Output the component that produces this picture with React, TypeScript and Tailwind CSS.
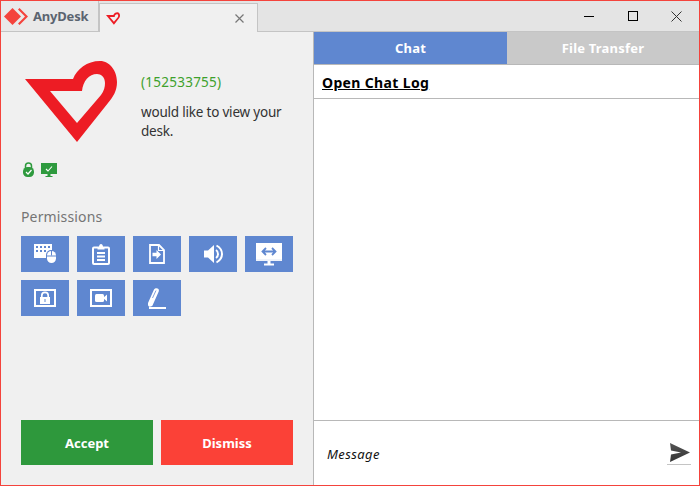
const W = "#ffffff";
const B = "#5f87d0";

function Heart({ w, h }: { w: number; h: number }) {
  return (
    <svg width={w} height={h} viewBox="0 0 92 81" className="block shrink-0">
      <path
        d="M0 18 L48 18 C52 8 62 0 75 0 C85 0 92 10 92 21 C92 30 88 36 83 42 L52 81 Z M25 30 L52 62 L76 34 C79 30 80 26 80 22 C80 16 76 13 72 13 C64 13 58 20 57 30 Z"
        fill="#ed1c24"
        fillRule="evenodd"
      />
    </svg>
  );
}

function KeyboardMouse() {
  return (
    <svg width="23" height="20" viewBox="0 0 23 20">
      <rect x="0" y="0" width="18" height="14" fill={W} />
      <g fill={B}>
        <rect x="2" y="2" width="2" height="2" /><rect x="6" y="2" width="2" height="2" /><rect x="10" y="2" width="2" height="2" /><rect x="14" y="2" width="2" height="2" />
        <rect x="2" y="6" width="2" height="2" /><rect x="6" y="6" width="2" height="2" /><rect x="10" y="6" width="2" height="2" />
      </g>
      <rect x="12" y="6" width="11" height="14" rx="5" fill={B} />
      <rect x="13" y="7" width="9" height="12" rx="4.500" fill={W} />
      <rect x="13" y="11.500" width="9" height="1" fill={B} />
      <rect x="17" y="7" width="1" height="4.500" fill={B} />
    </svg>
  );
}

function Clipboard() {
  return (
    <svg width="18" height="21" viewBox="0 0 18 21">
      <rect x="1" y="3.500" width="16" height="16.500" rx="1" fill="none" stroke={W} strokeWidth="2" />
      <path d="M5.500 3H7C7 1 8 0 9 0S11 1 11 3H12.500V5.500H5.500Z" fill={W} />
      <rect x="5" y="8" width="8" height="2" fill={W} /><rect x="5" y="11.500" width="8" height="2" fill={W} /><rect x="5" y="15" width="8" height="2" fill={W} />
    </svg>
  );
}

function FileArrow() {
  return (
    <svg width="16" height="20" viewBox="0 0 16 20">
      <path d="M1 1H10L15 6V19H1Z" fill="none" stroke={W} strokeWidth="1.800" />
      <path d="M9.500 1V6.500H15" fill="none" stroke={W} strokeWidth="1.200" />
      <path d="M3.500 8.800H7.500V6L12 10.500L7.500 15V12.200H3.500Z" fill={W} />
    </svg>
  );
}

function Speaker() {
  return (
    <svg width="19" height="20" viewBox="0 0 19 20">
      <path d="M0 6.500H4L10 1V19L4 13.500H0Z" fill={W} />
      <path d="M12 6C13.500 7 14 8.500 14 10S13.500 13 12 14" fill="none" stroke={W} strokeWidth="2" />
      <path d="M12.500 1.500C16 3.500 18 6.500 18 10S16 16.500 12.500 18.500" fill="none" stroke={W} strokeWidth="2" />
    </svg>
  );
}

function MonitorSwap() {
  return (
    <svg width="26" height="23" viewBox="0 0 26 23">
      <rect x="0" y="0" width="26" height="18" fill={W} />
      <rect x="0" y="16.500" width="26" height="1" fill="#dfe7f6" />
      <path d="M11.500 18H14.500V20.500H18V22.500H8V20.500H11.500Z" fill={W} />
      <path d="M6.500 8.500H19.500M10 5L6.500 8.500L10 12M16 5L19.500 8.500L16 12" fill="none" stroke={B} strokeWidth="1.800" />
    </svg>
  );
}

function FrameLock() {
  return (
    <svg width="22" height="18" viewBox="0 0 22 18">
      <rect x="1" y="1" width="20" height="16" fill="none" stroke={W} strokeWidth="2" />
      <path d="M7.800 8V6.500A3.200 3.200 0 0 1 14.200 6.500V8" fill="none" stroke={W} strokeWidth="1.700" />
      <rect x="6" y="8" width="10" height="7" fill={W} />
      <rect x="10.500" y="10" width="1" height="3" fill={B} />
    </svg>
  );
}

function FrameCamera() {
  return (
    <svg width="22" height="18" viewBox="0 0 22 18">
      <rect x="1" y="1" width="20" height="16" fill="none" stroke={W} strokeWidth="2" />
      <rect x="5" y="5" width="9" height="8" rx="1.500" fill={W} />
      <path d="M13 9L17 5.500V12.500Z" fill={W} />
    </svg>
  );
}

function PenLine() {
  return (
    <svg width="18" height="21" viewBox="0 0 18 21">
      <path d="M0 15L6 1.500C7 0 9.500 0 10.500 1C11 2 11 3 10.500 4L4.500 17.500C4 18.500 2 19 1 18.500C0 18 -.3 16 0 15Z" fill={W} />
      <path d="M8 2.500L4.500 10" stroke={B} strokeWidth=".8" />
      <rect x="1" y="19" width="17" height="2" fill={W} />
    </svg>
  );
}

function PermButton({ children }: { children: React.ReactNode }) {
  return <div className="flex h-9 w-12 items-center justify-center bg-[#5f87d0]">{children}</div>;
}

export default function App() {
  return (
    <div className="flex h-[486px] w-[700px] flex-col border border-[#f4433c] bg-[#f0f0f0] font-['Noto_Sans',sans-serif]">
      <div className="flex h-[31px] shrink-0 items-end bg-[#e4e4e4]">
        <div className="flex h-full w-[98px] shrink-0 items-center gap-[4px] border-r border-b border-[#c4c4c4] bg-[#e9e9e9] pl-[3px]">
          <svg width="25" height="17" viewBox="0 0 25 17" className="shrink-0">
            <path d="M8.500 0L17 8.500L8.500 17L0 8.500Z" fill="#f4433c" />
            <path d="M15.500 0L24 8.500L15.500 17L14 15.500L21 8.500L14 1.500Z" fill="#f4433c" />
          </svg>
          <span className="text-[13px] leading-none font-bold tracking-[-0.2px] text-[#5b6470]">AnyDesk</span>
        </div>
        <div className="flex h-[29px] w-[159px] shrink-0 items-center border-x border-t border-[#c4c4c4] bg-[#f0f0f0] pr-[13px] pl-[6px]">
          <Heart w={14} h={13} />
          <div className="flex-1" />
          <svg width="9" height="9" viewBox="0 0 9 9">
            <path d="M.5 .5L8.500 8.500M8.500 .5L.5 8.500" stroke="#777" strokeWidth="1.200" />
          </svg>
        </div>
        <div className="flex h-full flex-1 items-center border-b border-[#c4c4c4] pl-[326px]">
          <svg width="10" height="10" viewBox="0 0 10 10" className="shrink-0"><rect y="5" width="10" height="1" fill="#000" /></svg>
          <svg width="10" height="10" viewBox="0 0 10 10" className="ml-[34px] shrink-0"><rect x=".5" y=".5" width="9" height="9" fill="none" stroke="#000" /></svg>
          <svg width="11" height="11" viewBox="0 0 11 11" className="ml-[33px] shrink-0"><path d="M.5 .5L10.500 10.500M10.500 .5L.5 10.500" stroke="#333" /></svg>
        </div>
      </div>

      <div className="flex min-h-0 flex-1">
        <div className="flex w-[313px] shrink-0 flex-col border-r border-[#b8b8b8] bg-[#f0f0f0] pr-[19px] pb-[20px] pl-[20px]">
          <div className="flex pt-[29px] pl-[4px]">
            <Heart w={92} h={81} />
            <div className="pt-[11px] pl-[24px] text-[13.500px] text-[#333]">
              <div className="leading-5 tracking-[0.25px] text-[#3ea12c]">(152533755)</div>
              <div className="mt-[11px] w-[150px] leading-[19px] tracking-[-0.2px]">would like to view your desk.</div>
            </div>
          </div>
          <div className="mt-[20px] flex items-center gap-[7px] pl-[2px]">
            <svg width="11" height="15" viewBox="0 0 11 15" className="shrink-0">
              <path d="M2.500 6V4A3 3 0 0 1 8.500 4V6" fill="none" stroke="#2e9a3e" strokeWidth="1.500" />
              <rect x="0" y="5" width="11" height="10" rx="4.500" fill="#2e9a3e" />
              <path d="M3 10L5 12L8.500 8" fill="none" stroke="#fff" strokeWidth="1.200" />
            </svg>
            <svg width="16" height="14" viewBox="0 0 16 14" className="shrink-0">
              <rect width="16" height="11" fill="#2e9a3e" />
              <path d="M6.500 11H9.500V13H11.500V14H4.500V13H6.500Z" fill="#2e9a3e" />
              <path d="M5 6L7 8L11 3.500" fill="none" stroke="#fff" strokeWidth="1.100" />
            </svg>
          </div>
          <div className="mt-[30px] text-[14px] leading-5 tracking-[0.15px] text-[#757575]">Permissions</div>
          <div className="mt-[9px] flex w-[272px] flex-wrap gap-2">
            <PermButton><KeyboardMouse /></PermButton>
            <PermButton><Clipboard /></PermButton>
            <PermButton><FileArrow /></PermButton>
            <PermButton><Speaker /></PermButton>
            <PermButton><MonitorSwap /></PermButton>
            <PermButton><FrameLock /></PermButton>
            <PermButton><FrameCamera /></PermButton>
            <PermButton><PenLine /></PermButton>
          </div>
          <div className="mt-auto flex gap-2">
            <div className="flex h-[45px] w-[132px] items-center justify-center bg-[#2e983c] pt-[2px] text-[13px] font-bold text-white">Accept</div>
            <div className="flex h-[45px] w-[132px] items-center justify-center bg-[#fb4137] pt-[2px] text-[13px] font-bold text-white">Dismiss</div>
          </div>
        </div>

        <div className="flex min-w-0 flex-1 flex-col bg-white">
          <div className="flex h-[33px] shrink-0 border-b border-[#b8b8b8] text-[13px] font-bold tracking-[0.2px] text-white">
            <div className="flex w-[193px] items-center justify-center bg-[#5f87d0] pt-[2px]">Chat</div>
            <div className="flex flex-1 items-center justify-center bg-[#c9c9c9] pt-[2px]">File Transfer</div>
          </div>
          <div className="flex h-[34px] shrink-0 items-center border-b border-[#b8b8b8] pt-[2px] pl-[8px] text-[14px] font-bold tracking-[0.35px] text-black underline">
            Open Chat Log
          </div>
          <div className="flex-1" />
          <div className="flex h-[65px] shrink-0 items-center justify-between border-t border-[#b8b8b8] pr-[8px] pl-[13px]">
            <span className="pt-[4px] text-[13px] tracking-[0.4px] text-[#111] italic">Message</span>
            <div className="mt-[2px] flex w-[24px] flex-col items-center gap-[1px]">
              <svg width="21" height="20" viewBox="0 0 21 20">
                <defs>
                  <linearGradient id="snd" x1="0" y1="0" x2="0" y2="1">
                    <stop offset="0" stopColor="#555" />
                    <stop offset="1" stopColor="#333" />
                  </linearGradient>
                </defs>
                <path d="M1 0L21 9.500L1 19L2 11.500L12 9.500L2 7.500Z" fill="url(#snd)" />
              </svg>
              <div className="h-px w-[24px] bg-[#c4c4c4]" />
            </div>
          </div>
        </div>
      </div>
    </div>
  );
}
